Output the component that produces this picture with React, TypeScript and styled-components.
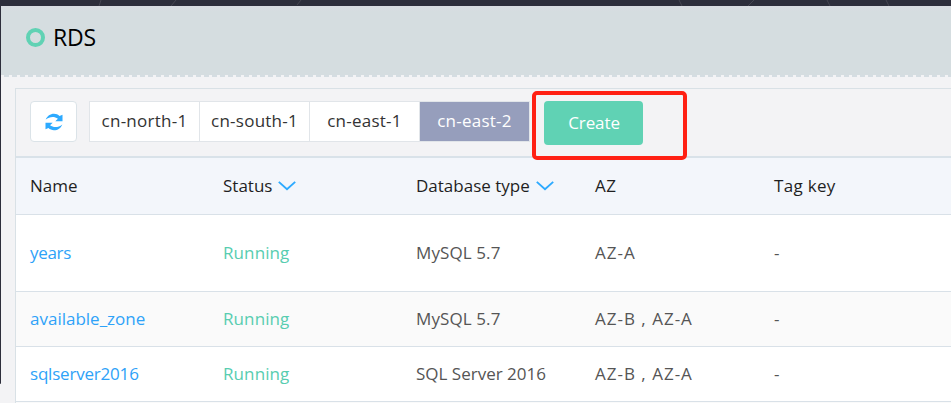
import React from "react";
import styled, { createGlobalStyle } from "styled-components";

const GlobalStyle = createGlobalStyle`
  * { box-sizing: border-box; }
  html, body { margin: 0; overflow: hidden; }
  body { font-family: "Open Sans", "Noto Sans", sans-serif; font-size: 17px; font-weight: 400; color: #1f1f1f; background: #f3f3f5; }
`;

const Page = styled.div`
  width: 951px;
  height: 403px;
  overflow: hidden;
  display: grid;
  grid-template-rows: 6px 397px;
  background: #f3f3f5;
`;

const TopStrip = styled.div`
  background: #2d2e3b;
  svg { display: block; }
`;

const Body = styled.div`
  display: grid;
  grid-template-columns: 1px 950px;
`;

const SideEdge = styled.div`
  height: 378px;
  background: #2d2e3b;
  border-radius: 0 0 0 1px;
`;

const PageHeader = styled.header`
  height: 69px;
  padding: 0 0 5px 25px;
  display: flex;
  align-items: center;
  gap: 9px;
  background: linear-gradient(#d9dce1, #d5dde0 6px);
`;

const Ring = styled.span`
  width: 19px;
  height: 19px;
  margin-top: -1px;
  border: 4.5px solid #60d2b4;
  border-radius: 50%;
`;

const Title = styled.h1`
  margin: 0 0 0 -1px;
  padding-bottom: 2px;
  font-size: 23px;
  line-height: 32px;
  font-weight: 400;
  letter-spacing: -0.2px;
  color: #000;
`;

const DashedEdge = styled.div`
  height: 2px;
  margin-left: 2px;
  background: repeating-linear-gradient(90deg, #f3f3f5 0 1px, #d5dde2 1px 6px, #f3f3f5 6px 8px);
`;

const Panel = styled.section`
  margin: 11px 0 0 14px;
  border: 1px solid #d9e1e6;
  border-right: 0;
  border-bottom: 0;
`;

const Toolbar = styled.div`
  height: 67px;
  padding: 12px 0 0 14px;
  display: flex;
  align-items: flex-start;
`;

const RefreshButton = styled.button`
  width: 47px;
  height: 41px;
  margin-right: 12px;
  padding: 0;
  display: grid;
  place-items: center;
  border: 1px solid #dbe3e8;
  border-radius: 4px;
  background: #fff;
`;

const Regions = styled.div`
  display: flex;
  height: 41px;
  width: 441px;
  border: 1px solid #e1e5e9;
`;

const RegionTab = styled.button<{ $active?: boolean }>`
  width: 110px;
  padding: 0 0 2px;
  border: 0;
  border-right: 1px solid #e1e5e9;
  font: inherit;
  letter-spacing: 0.25px;
  color: ${(p) => (p.$active ? "#fff" : "#333")};
  background: ${(p) => (p.$active ? "#969ebc" : "#fff")};
  &:last-child { border-right: 0; width: 109px; }
`;

const Highlight = styled.div`
  width: 155px;
  height: 69px;
  margin: -10px 0 0 2px;
  padding: 6px 0 0 8px;
  border: 4px solid #ff2013;
  border-radius: 5px;
  position: relative;
`;

const CreateButton = styled.button`
  width: 99px;
  height: 44px;
  padding: 0 0 2px 1px;
  border: 0;
  border-radius: 4px;
  font: inherit;
  letter-spacing: -0.1px;
  color: #fff;
  background: #60d2b4;
`;

const Table = styled.div`
  border-top: 2px solid #d9e2e9;
`;

const Row = styled.div<{ $height: number; $tone?: "head" | "alt" }>`
  height: ${(p) => p.$height}px;
  display: grid;
  grid-template-columns: 193px 193px 179px 179px 1fr;
  align-items: center;
  padding-left: 14px;
  border-bottom: 1px solid #d9e1e8;
  color: ${(p) => (p.$tone === "head" ? "#1f1f1f" : "#555")};
  background: ${(p) => (p.$tone === "head" ? "#f3f6fb" : p.$tone === "alt" ? "#fafafa" : "#fff")};
`;

const Cell = styled.div<{ $kind?: "link" | "status"; $spacing?: number }>`
  display: flex;
  align-items: center;
  white-space: pre;
  line-height: 24px;
  letter-spacing: ${(p) => p.$spacing ?? 0}px;
  color: ${(p) => (p.$kind === "link" ? "#2ea2f8" : p.$kind === "status" ? "#58cdb0" : "inherit")};
`;

const NextRow = styled.div`
  height: 4px;
  background: #fafafa;
`;

const RefreshIcon = () => (
  <svg width="18" height="18" viewBox="0 0 18 18" fill="#2daaff">
    <path d="M.7 6.6C2.2 3 5.2.8 9 .8c2.2 0 4.1.8 5.5 2.2L17.5 1.8v6.4H10.3L12.9 5.7C9.3 3 4.6 3.4.7 6.6Z" />
    <path d="M17.3 11.4c-1.5 3.6-4.5 5.8-8.3 5.8-2.2 0-4.1-.8-5.5-2.2L.5 16.2V9.8h7.2l-2.6 2.5c3.6 2.7 8.3 2.3 12.2-.9Z" />
  </svg>
);

const ChevronSvg = styled.svg`
  margin-left: 6px;
`;

const Chevron = () => (
  <ChevronSvg width="18" height="10" viewBox="0 0 18 10" fill="none" stroke="#2daaff" strokeWidth="1.9">
    <path d="M.8.9 9 8.3 17.2.9" />
  </ChevronSvg>
);

const regions = ["cn-north-1", "cn-south-1", "cn-east-1", "cn-east-2"];

const databases = [
  { name: "years", nameSpacing: -0.3, type: "MySQL 5.7", typeSpacing: 0.1, az: "AZ-A", height: 77 },
  { name: "available_zone", nameSpacing: 0, type: "MySQL 5.7", typeSpacing: 0.1, az: "AZ-B , AZ-A", height: 55 },
  { name: "sqlserver2016", nameSpacing: -0.2, type: "SQL Server 2016", typeSpacing: 0, az: "AZ-B , AZ-A", height: 55 },
];

export default function App() {
  return (
    <Page>
      <GlobalStyle />
      <TopStrip>
        <svg width="951" height="6" fill="none" stroke="#464651">
          <path d="M99 6l2-6M171 6l5-6M297 5l4-5M679 0l3 6M748 6l6-6M827 0l3 6M886 0l3 6" />
        </svg>
      </TopStrip>
      <Body>
        <SideEdge />
        <main>
          <PageHeader>
            <Ring />
            <Title>RDS</Title>
          </PageHeader>
          <DashedEdge />
          <Panel>
            <Toolbar>
              <RefreshButton aria-label="Refresh">
                <RefreshIcon />
              </RefreshButton>
              <Regions>
                {regions.map((r) => (
                  <RegionTab key={r} $active={r === "cn-east-2"}>{r}</RegionTab>
                ))}
              </Regions>
              <Highlight>
                <CreateButton>Create</CreateButton>
              </Highlight>
            </Toolbar>
            <Table>
              <Row $height={57} $tone="head">
                <Cell>Name</Cell>
                <Cell>Status<Chevron /></Cell>
                <Cell>Database type<Chevron /></Cell>
                <Cell $spacing={0.4}>AZ</Cell>
                <Cell $spacing={0.3}>Tag key</Cell>
              </Row>
              {databases.map((d, i) => (
                <Row key={d.name} $height={d.height} $tone={i % 2 ? "alt" : undefined}>
                  <Cell $kind="link" $spacing={d.nameSpacing}>{d.name}</Cell>
                  <Cell $kind="status" $spacing={0.1}>Running</Cell>
                  <Cell $spacing={d.typeSpacing}>{d.type}</Cell>
                  <Cell $spacing={1}>{d.az}</Cell>
                  <Cell>-</Cell>
                </Row>
              ))}
              <NextRow />
            </Table>
          </Panel>
        </main>
      </Body>
    </Page>
  );
}
